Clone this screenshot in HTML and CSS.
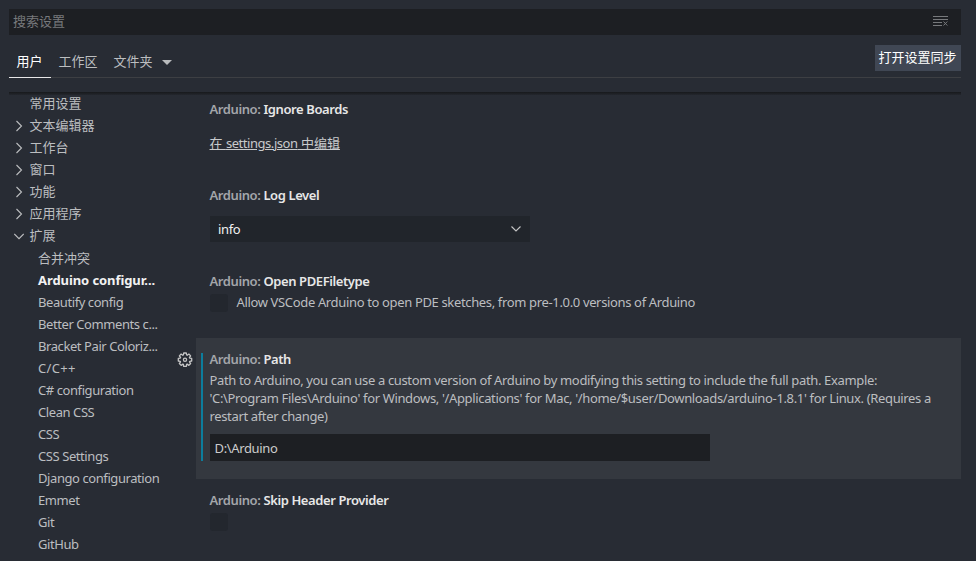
FILE: index.html
```
<!DOCTYPE html>
<html lang="zh-CN">
<head>
<meta charset="utf-8">
<title>设置</title>
<link rel="stylesheet" href="styles.css">
</head>
<body>
<div class="editor">
  <div class="search">
    <span>搜索设置</span>
    <svg class="clear" width="16" height="12" viewBox="0 0 16 12" fill="none" stroke="#77797c"><path d="M0 1.5h15M0 4.5h15M0 7.5h9M0 10.5h9M10.5 6.5l3.8 4M14.3 6.5l-3.8 4"/></svg>
  </div>
  <div class="tabs">
    <div class="tab active">用户</div>
    <div class="tab">工作区</div>
    <div class="tab">文件夹<svg class="caret" width="10" height="5" viewBox="0 0 10 5"><path d="M0 0h10L5 5z" fill="#b9bbbd"/></svg></div>
    <button class="sync">打开设置同步</button>
  </div>
  <div class="shadow"></div>
  <div class="body">
    <nav class="toc">
      <div class="row group"><i class="twist"></i>常用设置</div>
      <div class="row group"><i class="twist"><svg width="10" height="12" viewBox="0 0 10 12"><path d="M2.5 1l5 5-5 5"/></svg></i>文本编辑器</div>
      <div class="row group"><i class="twist"><svg width="10" height="12" viewBox="0 0 10 12"><path d="M2.5 1l5 5-5 5"/></svg></i>工作台</div>
      <div class="row group"><i class="twist"><svg width="10" height="12" viewBox="0 0 10 12"><path d="M2.5 1l5 5-5 5"/></svg></i>窗口</div>
      <div class="row group"><i class="twist"><svg width="10" height="12" viewBox="0 0 10 12"><path d="M2.5 1l5 5-5 5"/></svg></i>功能</div>
      <div class="row group"><i class="twist"><svg width="10" height="12" viewBox="0 0 10 12"><path d="M2.5 1l5 5-5 5"/></svg></i>应用程序</div>
      <div class="row group"><i class="twist"><svg width="10" height="12" viewBox="0 0 10 12"><path d="M.3 4l4.7 4.7L9.7 4"/></svg></i>扩展</div>
      <div class="row child">合并冲突</div>
      <div class="row child selected">Arduino configur...</div>
      <div class="row child latin">Beautify config</div>
      <div class="row child latin">Better Comments c...</div>
      <div class="row child latin">Bracket Pair Coloriz...</div>
      <div class="row child symbols">C/C++</div>
      <div class="row child latin">C# configuration</div>
      <div class="row child latin">Clean CSS</div>
      <div class="row child latin">CSS</div>
      <div class="row child latin">CSS Settings</div>
      <div class="row child latin">Django configuration</div>
      <div class="row child latin">Emmet</div>
      <div class="row child latin">Git</div>
      <div class="row child latin">GitHub</div>
    </nav>
    <main class="settings">
      <section class="item first">
        <h3><span>Arduino:</span> Ignore Boards</h3>
        <a class="link">在 <span class="latin">settings.json</span> 中编辑</a>
      </section>
      <section class="item level">
        <h3><span>Arduino:</span> Log Level</h3>
        <div class="select latin">info<svg width="10" height="6" viewBox="0 0 10 6"><path d="M.5.5L5 5 9.5.5" fill="none" stroke="#c5c5c5" stroke-width="1.1"/></svg></div>
      </section>
      <section class="item pde">
        <h3><span>Arduino:</span> Open PDEFiletype</h3>
        <div class="check-row"><span class="checkbox"></span><span class="latin">Allow VSCode Arduino to open PDE sketches, from pre-1.0.0 versions of Arduino</span></div>
      </section>
      <section class="item path">
        <svg class="gear" width="16" height="16" viewBox="0 0 16 16" fill="none" stroke="#c5c5c5" stroke-width="1.3" stroke-linejoin="round"><path d="M6.7 1h2.6l.3 2 .6.25 1.65-1.2 1.8 1.8-1.2 1.65.25.6 2 .3v2.6l-2 .3-.25.6 1.2 1.65-1.8 1.8-1.65-1.2-.6.25-.3 2H6.7l-.3-2-.6-.25-1.65 1.2-1.8-1.8 1.2-1.65-.25-.6-2-.3V6.4l2-.3.25-.6-1.2-1.65 1.8-1.8L5.8 3.25 6.4 3z"/><circle cx="8" cy="7.8" r="1.6"/></svg>
        <div class="modified">
          <h3><span>Arduino:</span> Path</h3>
          <p class="latin">Path to Arduino, you can use a custom version of Arduino by modifying this setting to include the full path. Example:<br>'C:\Program Files\Arduino' for Windows, '/Applications' for Mac, '/home/$user/Downloads/arduino-1.8.1' for Linux. (Requires a<br>restart after change)</p>
          <div class="input latin">D:\Arduino</div>
        </div>
      </section>
      <section class="item">
        <h3><span>Arduino:</span> Skip Header Provider</h3>
        <div class="check-row"><span class="checkbox"></span></div>
      </section>
    </main>
  </div>
</div>
</body>
</html>
```
FILE: styles.css
```
* { box-sizing: border-box; }
body {
  margin: 0;
  background: #282c34;
  color: #bcbec0;
  font: 13px/18px "Noto Sans", "Noto Sans CJK SC", sans-serif;
}
.editor {
  width: 976px;
  height: 561px;
  padding: 9px 15px 0 9px;
  overflow: hidden;
}
.latin { letter-spacing: -0.35px; }
.search {
  display: flex;
  justify-content: space-between;
  align-items: center;
  height: 26px;
  padding: 0 12px 2px 4px;
  background: #1d1f23;
  color: #77797c;
}
.clear { margin-top: 0; }
.tabs {
  display: flex;
  height: 33px;
  margin-top: 10px;
  border-bottom: 1px solid #3d3f43;
}
.tab {
  display: flex;
  align-items: center;
  height: 33px;
  padding: 0 8.5px 2px 7.5px;
}
.tab.active {
  width: 42px;
  padding-bottom: 1px;
  color: #fff;
  border-bottom: 1px solid #e7e7e7;
}
.caret { margin: 4px 0 0 9px; }
.sync {
  width: 86px;
  height: 26px;
  margin-left: auto;
  padding: 0 1px 2px 0;
  border: 0;
  background: #404754;
  color: #fff;
  font: inherit;
}
.shadow {
  height: 3px;
  margin-top: 14px;
  background: linear-gradient(#17191c, #24272d);
}
.body { display: flex; margin-top: -2px; }
.toc { width: 187px; flex: none; }
.row {
  display: flex;
  align-items: center;
  height: 22px;
  padding-left: 5px;
  white-space: nowrap;
}
.row.group { padding: 0 0 2px 4.5px; }
.row.child { padding-left: 29px; }
.row.latin { letter-spacing: -0.42px; }
.row.symbols { letter-spacing: 0.35px; }
.row.selected { color: #f2f2f2; font-weight: 700; letter-spacing: -0.08px; }
.twist { display: flex; width: 16px; padding-top: 1px; }
.twist svg { margin-left: .5px; }
.twist path { fill: none; stroke: #bcbec0; stroke-width: 1.1; }
.settings { flex: 1; }
.item { position: relative; padding: 12px 14px 0 13.5px; }
.item.first { height: 81px; padding-top: 7px; }
.item.level { height: 86px; }
.item.pde { height: 78px; }
.item.path { height: 141px; padding: 15px 14px 0 5px; background: #34383f; }
h3 {
  margin: 0;
  font-size: 13px;
  line-height: 18px;
  font-weight: 600;
  color: #e7e7e7;
  letter-spacing: -0.4px;
}
h3 span { color: #a3a6aa; }
.link {
  display: block;
  margin-top: 16px;
  color: #c8cacc;
  text-decoration: underline;
}
.link .latin { letter-spacing: -0.45px; }
.select {
  display: flex;
  align-items: center;
  justify-content: space-between;
  width: 320px;
  height: 26px;
  margin: 12px 0 0 .5px;
  padding: 0 9px 0 8px;
  background: #21252b;
  color: #f0f0f0;
}
.check-row { display: flex; margin-top: 3px; white-space: nowrap; }
.checkbox {
  width: 18px;
  height: 18px;
  margin: 1px 8.5px 0 .5px;
  border-radius: 3px;
  background: #23272e;
}
.gear { position: absolute; left: -19.5px; top: 14px; }
.modified {
  height: 108px;
  padding-left: 6.5px;
  border-left: 2px solid #0c7d9d;
}
.modified h3 { position: relative; top: -3px; }
.modified p { margin: 0 0 9px; white-space: nowrap; }
.input {
  width: 500px;
  height: 27px;
  margin-left: .5px;
  padding: 5px 4.5px;
  background: #1d1f23;
  color: #ccc;
}
```
